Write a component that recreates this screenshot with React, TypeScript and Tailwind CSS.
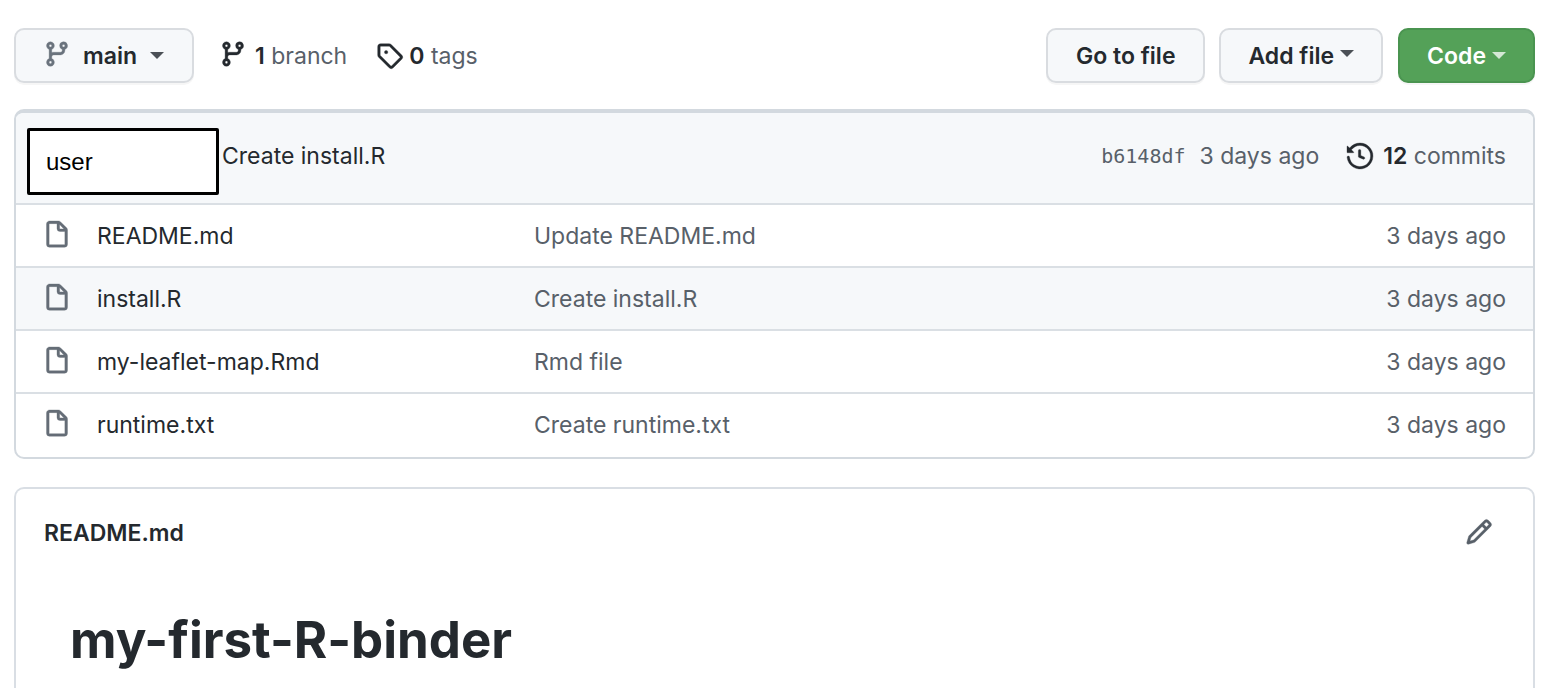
import React from 'react';

const PATHS = {
  branch:
    'M11.75 2.5a.75.75 0 100 1.5.75.75 0 000-1.5zm-2.25.75a2.25 2.25 0 113 2.122V6A2.5 2.5 0 0110 8.5H6a1 1 0 00-1 1v1.128a2.251 2.251 0 11-1.5 0V5.372a2.25 2.25 0 111.5 0v1.836A2.492 2.492 0 016 7h4a1 1 0 001-1v-.628A2.25 2.25 0 019.5 3.25zM4.25 12a.75.75 0 100 1.5.75.75 0 000-1.5zM3.5 3.25a.75.75 0 111.5 0 .75.75 0 01-1.5 0z',
  tag: 'M2.5 7.775V2.75a.25.25 0 01.25-.25h5.025a.25.25 0 01.177.073l6.25 6.25a.25.25 0 010 .354l-5.025 5.025a.25.25 0 01-.354 0l-6.25-6.25a.25.25 0 01-.073-.177zm-1.5 0V2.75C1 1.784 1.784 1 2.75 1h5.025c.464 0 .91.184 1.238.513l6.25 6.25a1.75 1.75 0 010 2.474l-5.026 5.026a1.75 1.75 0 01-2.474 0l-6.25-6.25A1.75 1.75 0 011 7.775zM6 5a1 1 0 100 2 1 1 0 000-2z',
  history:
    'M1.643 3.143L.427 1.927A.25.25 0 000 2.104V5.75c0 .138.112.25.25.25h3.646a.25.25 0 00.177-.427L2.715 4.215a6.5 6.5 0 11-1.18 4.458.75.75 0 10-1.493.154 8.001 8.001 0 101.6-5.684zM7.75 4a.75.75 0 01.75.75v2.992l2.028.812a.75.75 0 01-.557 1.392l-2.5-1A.75.75 0 017 8.25v-3.5A.75.75 0 017.75 4z',
  file: 'M3.75 1.5a.25.25 0 00-.25.25v11.5c0 .138.112.25.25.25h8.5a.25.25 0 00.25-.25V6H9.75A1.75 1.75 0 018 4.25V1.5H3.75zm5.75.56v2.19c0 .138.112.25.25.25h2.19L9.5 2.06zM2 1.75C2 .784 2.784 0 3.75 0h5.086c.464 0 .909.184 1.237.513l3.414 3.414c.329.328.513.773.513 1.237v8.086A1.75 1.75 0 0112.25 15h-8.5A1.75 1.75 0 012 13.25V1.75z',
  pencil:
    'M11.013 1.427a1.75 1.75 0 012.474 0l1.086 1.086a1.75 1.75 0 010 2.474l-8.61 8.61c-.21.21-.47.364-.756.445l-3.251.93a.75.75 0 01-.927-.928l.929-3.25a1.75 1.75 0 01.445-.758l8.61-8.61zm1.414 1.06a.25.25 0 00-.354 0L10.811 3.75l1.439 1.44 1.263-1.263a.25.25 0 000-.354l-1.086-1.086zM11.189 6.25L9.75 4.81l-6.286 6.287a.25.25 0 00-.064.108l-.558 1.953 1.953-.558a.249.249 0 00.108-.064l6.286-6.286z',
};

function Icon({ name, className }: { name: keyof typeof PATHS; className: string }) {
  return (
    <svg
      viewBox="0 0 16 16"
      fill="currentColor"
      stroke="currentColor"
      strokeWidth="0.2"
      fillRule="evenodd"
      aria-hidden="true"
      className={`shrink-0 overflow-visible ${className}`}
    >
      <path d={PATHS[name]} />
    </svg>
  );
}

function Caret({ className }: { className: string }) {
  return (
    <svg viewBox="0 0 14 7" fill="currentColor" aria-hidden="true" className={`h-[7px] w-3.5 shrink-0 ${className}`}>
      <path d="M0 0h14L7 7z" />
    </svg>
  );
}

const BUTTON =
  'flex h-[55px] items-center rounded-[10px] border-2 font-semibold shadow-[0_2px_0_rgba(27,31,35,0.04)]';
const GRAY = 'border-[#d9dce0] bg-[#f6f8fa] text-[#24292e]';

const FILES = [
  { name: 'README.md', message: 'Update README.md' },
  { name: 'install.R', message: 'Create install.R', active: true },
  { name: 'my-leaflet-map.Rmd', message: 'Rmd file' },
  { name: 'runtime.txt', message: 'Create runtime.txt' },
];

export default function App() {
  return (
    <main className="min-h-screen bg-white pt-7 pr-[23px] pl-3.5 font-['Inter',sans-serif] text-[23px] leading-[34px] text-[#24292e]">
      <div className="flex items-center">
        <button type="button" className={`${BUTTON} ${GRAY} pr-7 pl-[27px]`}>
          <Icon name="branch" className="mr-3 mb-1 size-7 text-[#6a737d]" />
          main
          <Caret className="ml-[13px] text-[#4b5056]" />
        </button>
        <a href="#branches" className="ml-[25px] flex items-center">
          <Icon name="branch" className="mr-2 mb-1 size-7" />
          <span className="text-[#586069]">
            <strong className="font-semibold text-[#24292e]">1</strong> branch
          </span>
        </a>
        <a href="#tags" className="ml-[29px] flex items-center">
          <Icon name="tag" className="mr-1.5 size-[27px]" />
          <span className="text-[#586069]">
            <strong className="font-semibold text-[#24292e]">0</strong> tags
          </span>
        </a>
        <div className="ml-auto flex items-center">
          <button type="button" className={`${BUTTON} ${GRAY} px-7`}>
            Go to file
          </button>
          <button type="button" className={`${BUTTON} ${GRAY} ml-3.5 px-[27px]`}>
            Add file
            <Caret className="mb-1 ml-1.5 text-[#4b5056]" />
          </button>
          <button type="button" className={`${BUTTON} ml-[15px] border-[#4a9450] bg-[#54a158] px-[27px] text-white`}>
            Code
            <Caret className="ml-1.5 text-[#d4e8d5]" />
          </button>
        </div>
      </div>

      <section className="mt-[26px] overflow-hidden rounded-[10px] border-2 border-t-4 border-[#d3d9df] pb-px">
        <div className="flex h-[90px] items-start bg-[#f6f8fa] pr-[27px] pl-[11px]">
          <div className="mt-[15px] flex h-[67px] w-48 items-center rounded-xs border-[3px] border-black bg-white px-4 font-['Liberation_Sans',sans-serif] text-2xl text-black">
            user
          </div>
          <a href="#commit" className="mt-[26px] ml-[3px]">
            Create install.R
          </a>
          <div className="mt-[26px] ml-auto flex items-center text-[#586069]">
            <a href="#commit" className="font-['DejaVu_Sans_Mono',monospace] text-xl leading-[34px]">
              b6148df
            </a>
            <span className="ml-3.5">3 days ago</span>
            <a href="#commits" className="ml-7 flex items-center">
              <Icon name="history" className="mr-2.5 size-[26px] text-[#24292e]" />
              <span>
                <strong className="font-semibold text-[#24292e]">12</strong> commits
              </span>
            </a>
          </div>
        </div>
        <table className="w-full table-fixed border-collapse" aria-label="Files">
          <colgroup>
            <col className="w-[81px]" />
            <col className="w-[437px]" />
            <col />
            <col className="w-60" />
          </colgroup>
          <tbody>
            {FILES.map((file) => (
              <tr key={file.name} className={`h-[63px] border-t-2 border-[#dadfe4] ${file.active ? 'bg-[#f6f8fa]' : ''}`}>
                <td className="pb-0.5 pl-[27px]">
                  <Icon name="file" className="size-7 text-[#656d77]" />
                </td>
                <td>
                  <a href="#file">{file.name}</a>
                </td>
                <td className="text-[#586069]">{file.message}</td>
                <td className="pr-[27px] text-right text-[#586069]">3 days ago</td>
              </tr>
            ))}
          </tbody>
        </table>
      </section>

      <section className="mt-7 rounded-t-[10px] border-2 border-b-0 border-[#d9dee4] px-7">
        <div className="flex h-[88px] items-center justify-between">
          <h2 className="font-semibold">README.md</h2>
          <button type="button" aria-label="Edit README.md" className="mr-3 pb-0.5">
            <Icon name="pencil" className="size-7 text-[#586069]" />
          </button>
        </div>
        <h1 className="mt-7 ml-[26px] h-[83px] text-[51px] leading-[70px] font-bold">my-first-R-binder</h1>
      </section>
    </main>
  );
}
